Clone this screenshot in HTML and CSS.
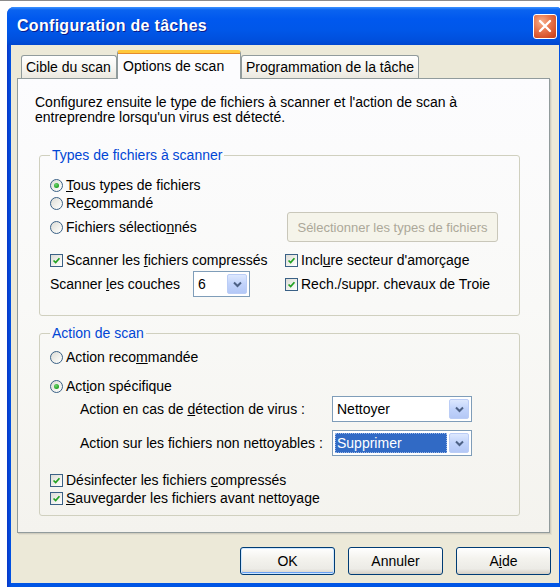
FILE: index.html
```html
<!DOCTYPE html>
<html lang="fr">
<head>
<meta charset="utf-8">
<title>Configuration de tâches</title>
<link rel="stylesheet" href="styles.css">
</head>
<body>
<div class="topline"></div>
<div class="window">
  <div class="titlebar">
    <span class="title">Configuration de tâches</span>
    <span class="close" aria-label="Fermer">
      <svg width="14" height="14" viewBox="0 0 14 14"><path d="M2 2 L12 12 M12 2 L2 12" stroke="#fff" stroke-width="2.4" stroke-linecap="round"/></svg>
    </span>
  </div>
  <div class="client">
    <div class="tabs">
      <div class="tab">Cible du scan</div>
      <div class="tab active">Options de scan</div>
      <div class="tab">Programmation de la tâche</div>
    </div>
    <div class="panel">
      <p class="intro">Configurez ensuite le type de fichiers à scanner et l'action de scan à<br>entreprendre lorsqu'un virus est détecté.</p>

      <fieldset class="group group-types">
        <legend>Types de fichiers à scanner</legend>
        <div class="row r18"><span class="radio on"></span><span><u>T</u>ous types de fichiers</span></div>
        <div class="row r18"><span class="radio"></span><span>Re<u>c</u>ommandé</span></div>
        <div class="grid2 r30">
          <div class="row"><span class="radio"></span><span>Fichiers sélectio<u>n</u>nés</span></div>
          <div class="btn disabled wide">Sélectionner les types de fichiers</div>
        </div>
        <div class="grid2 r18 gap9">
          <div class="row"><span class="check"><svg viewBox="0 0 13 13"><path d="M3 6.5 L5.5 9 L10 3.8" fill="none" stroke="#21a121" stroke-width="2"/></svg></span><span>Scanner les <u>f</u>ichiers compressés</span></div>
          <div class="row"><span class="check"><svg viewBox="0 0 13 13"><path d="M3 6.5 L5.5 9 L10 3.8" fill="none" stroke="#21a121" stroke-width="2"/></svg></span><span>Incl<u>u</u>re secteur d'amorçage</span></div>
        </div>
        <div class="grid2 r26 gap2">
          <div class="row"><span class="plain">Scanner <u>l</u>es couches</span>
            <div class="combo small"><span class="value">6</span><span class="arrow"><svg width="9" height="7" viewBox="0 0 9 7"><path d="M1 1.5 L4.5 5 L8 1.5" fill="none" stroke="#4d6185" stroke-width="2"/></svg></span></div>
          </div>
          <div class="row"><span class="check"><svg viewBox="0 0 13 13"><path d="M3 6.5 L5.5 9 L10 3.8" fill="none" stroke="#21a121" stroke-width="2"/></svg></span><span>Rech./suppr. chevaux de Troie</span></div>
        </div>
      </fieldset>

      <fieldset class="group group-action">
        <legend>Action de scan</legend>
        <div class="row r18"><span class="radio"></span><span>Action reco<u>m</u>mandée</span></div>
        <div class="row r18 gap11"><span class="radio on"></span><span>Act<u>i</u>on spécifique</span></div>
        <div class="action-row gap1">
          <span class="action-label">Action en cas de <u>d</u>étection de virus :</span>
          <div class="combo"><span class="value">Nettoyer</span><span class="arrow"><svg width="9" height="7" viewBox="0 0 9 7"><path d="M1 1.5 L4.5 5 L8 1.5" fill="none" stroke="#4d6185" stroke-width="2"/></svg></span></div>
        </div>
        <div class="action-row gap8">
          <span class="action-label">Action sur les fichiers non nettoyables :</span>
          <div class="combo focused"><span class="value">Supprimer</span><span class="arrow"><svg width="9" height="7" viewBox="0 0 9 7"><path d="M1 1.5 L4.5 5 L8 1.5" fill="none" stroke="#4d6185" stroke-width="2"/></svg></span></div>
        </div>
        <div class="row r18 gap15"><span class="check"><svg viewBox="0 0 13 13"><path d="M3 6.5 L5.5 9 L10 3.8" fill="none" stroke="#21a121" stroke-width="2"/></svg></span><span>Désinfecter les fichiers <u>c</u>ompressés</span></div>
        <div class="row r18"><span class="check"><svg viewBox="0 0 13 13"><path d="M3 6.5 L5.5 9 L10 3.8" fill="none" stroke="#21a121" stroke-width="2"/></svg></span><span><u>S</u>auvegarder les fichiers avant nettoyage</span></div>
      </fieldset>
    </div>
    <div class="buttons">
      <div class="btn default">OK</div>
      <div class="btn">Annuler</div>
      <div class="btn">A<u>i</u>de</div>
    </div>
  </div>
</div>
</body>
</html>
```
FILE: styles.css
```css
html, body {
  margin: 0;
  padding: 0;
}

body {
  background: #ffffff;
  overflow: hidden;
  font-family: "Liberation Sans", Arial, sans-serif;
  font-size: 14px;
  color: #000;
}

.topline {
  height: 1px;
  background: #8c8c8c;
}

/* ---- window frame ---- */
.window {
  margin: 6px 0 0 7px;
  width: 556px;
  height: 580px;
  box-sizing: border-box;
  padding: 0 4px 4px 4px;
  border-radius: 7px 7px 0 0;
  background: linear-gradient(90deg, #0836c8 0, #0055e5 4px, #0055e5 calc(100% - 4px), #0836c8 100%);
  display: flex;
  flex-direction: column;
}

.titlebar {
  height: 38px;
  margin: 0 -4px;
  padding: 0 6px 0 10px;
  border-radius: 7px 7px 0 0;
  display: flex;
  align-items: center;
  justify-content: space-between;
  background: linear-gradient(180deg, #3c93ff 0, #0a63f0 3px, #0058ee 12px, #0057e9 60%, #0050de 85%, #0046cf 100%);
}

.title {
  color: #fff;
  font-weight: bold;
  font-size: 16px;
  letter-spacing: 0.3px;
  text-shadow: 1px 1px 0 #0a1b8a;
}

.close {
  width: 24px;
  height: 25px;
  box-sizing: border-box;
  border: 1px solid #fff;
  border-radius: 3px;
  display: flex;
  align-items: center;
  justify-content: center;
  background: radial-gradient(circle at 35% 30%, #f7b08c 0, #e8774f 40%, #d24c25 80%, #c0401d 100%);
}

.client {
  flex: 1;
  background: #ece9d8;
  display: flex;
  flex-direction: column;
}

/* ---- tabs ---- */
.tabs {
  display: flex;
  align-items: flex-end;
  height: 28px;
  margin: 5px 0 0 10px;
  position: relative;
  z-index: 1;
}

.tab {
  height: 23px;
  box-sizing: border-box;
  padding: 0 4px;
  margin-right: 2px;
  display: flex;
  align-items: center;
  border: 1px solid #919b9c;
  border-bottom: none;
  border-radius: 3px 3px 0 0;
  background: linear-gradient(180deg, #ffffff 0, #f7f6f2 50%, #ebe8df 100%);
  white-space: nowrap;
}

.tab:nth-child(1) { width: 96px; }
.tab:nth-child(3) { width: 178px; }

.tab.active {
  width: 124px;
  margin: 0 0 -1px -2px;
  padding: 0 5px;
  border-top: 3px solid #ffc83c;
  box-shadow: inset 0 1px 0 #e68b2c;
  background: #fcfcfe;
  height: 29px;
}

/* ---- tab page ---- */
.panel {
  margin-left: 6px;
  width: 533px;
  height: 455px;
  box-sizing: border-box;
  border: 1px solid #919b9c;
  padding: 16px 0 0 17px;
  background: linear-gradient(180deg, #fcfcfe 0, #f9f9f7 50%, #f4f3ee 100%);
  box-shadow: 1px 1px 0 #d0cdbf, 2px 2px 0 #e2dfd0;
}

.intro {
  margin: 0;
  line-height: 15px;
}

.group {
  margin: 22px 0 0 4px;
  width: 481px;
  box-sizing: border-box;
  border: 1px solid #d0d0bf;
  border-radius: 3px;
  padding: 13px 0 18px 10px;
  min-width: 0;
}

.group legend {
  color: #0046d5;
  padding: 0 2px;
  line-height: 16px;
}

.group-action {
  margin-top: 9px;
  padding: 7px 0 8px 10px;
}

.row {
  display: flex;
  align-items: center;
  white-space: nowrap;
}

.r18 { height: 18px; }
.r26 { height: 26px; }
.r30 { height: 30px; }
.gap1 { margin-top: 1px; }
.gap2 { margin-top: 2px; }
.gap8 { margin-top: 8px; }
.gap9 { margin-top: 9px; }
.gap11 { margin-top: 11px; }
.gap15 { margin-top: 15px; }

.grid2 {
  display: grid;
  grid-template-columns: 235px 1fr;
  align-items: center;
}

/* ---- radio buttons & check boxes ---- */
.radio {
  width: 13px;
  height: 13px;
  box-sizing: border-box;
  border: 1px solid #3a6186;
  border-radius: 50%;
  margin-right: 3px;
  display: inline-flex;
  align-items: center;
  justify-content: center;
  background: linear-gradient(135deg, #dcdcd6 0, #f2f2ee 60%, #ffffff 100%);
  flex: none;
}

.radio.on::after {
  content: "";
  width: 5px;
  height: 5px;
  border-radius: 50%;
  background: radial-gradient(circle at 40% 35%, #6fd46f 0, #21a121 70%);
}

.check {
  width: 13px;
  height: 13px;
  box-sizing: border-box;
  border: 1px solid #3a6186;
  margin-right: 3px;
  background: linear-gradient(135deg, #dcdcd6 0, #f2f2ee 60%, #ffffff 100%);
  flex: none;
  display: inline-block;
}

.check svg {
  display: block;
  width: 11px;
  height: 11px;
}

.plain {
  width: 143px;
}

/* ---- combo boxes ---- */
.combo {
  height: 26px;
  width: 140px;
  box-sizing: border-box;
  border: 1px solid #7f9db9;
  background: #fff;
  display: flex;
  align-items: stretch;
  padding: 2px;
}

.combo.small {
  width: 57px;
}

.combo .value {
  flex: 1;
  display: flex;
  align-items: center;
  padding-left: 2px;
}

.combo.focused .value {
  background: #316ac5;
  color: #fff;
  outline: 1px dotted #9cb8e6;
  outline-offset: -1px;
}

.combo .arrow {
  width: 20px;
  display: flex;
  align-items: center;
  justify-content: center;
  border-radius: 2px;
  background: linear-gradient(180deg, #dde8fe 0, #c1d3fb 50%, #b4c8f6 100%);
  border: 1px solid #bbcdf6;
  box-sizing: border-box;
  margin-left: 2px;
}

.action-row {
  display: flex;
  align-items: center;
  height: 26px;
  padding-left: 30px;
}

.action-label {
  width: 252px;
  white-space: nowrap;
}

/* ---- push buttons ---- */
.btn {
  height: 28px;
  width: 95px;
  box-sizing: border-box;
  border: 1px solid #003c74;
  border-radius: 3px;
  display: flex;
  align-items: center;
  justify-content: center;
  background: linear-gradient(180deg, #ffffff 0, #f4f3ee 40%, #ecebe6 80%, #d6d0c5 100%);
  white-space: nowrap;
}

.btn.default {
  box-shadow: inset 0 0 0 1px #cee7ff, inset 0 -1px 0 1px #69a1f4;
}

.btn.disabled {
  color: #aca899;
  border-color: #c9c7ba;
  background: #f5f4ea;
  font-size: 13px;
}

.btn.wide {
  width: 211px;
  height: 30px;
  margin-left: 2px;
}

.buttons {
  display: flex;
  justify-content: flex-end;
  gap: 13px;
  margin-top: 14px;
  padding-right: 8px;
}
```
